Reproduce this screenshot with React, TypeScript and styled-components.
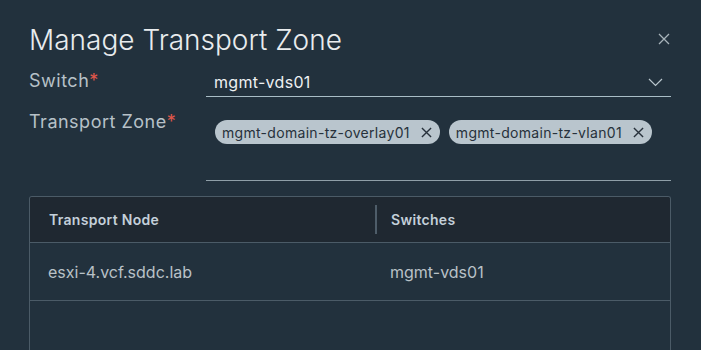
import React from 'react';
import styled, { createGlobalStyle } from 'styled-components';

const GlobalStyle = createGlobalStyle`
  html, body {
    margin: 0;
    padding: 0;
    background: #22313d;
    font-family: Inter, "Open Sans", sans-serif;
  }
`;

const Modal = styled.div`
  width: 701px;
  height: 350px;
  overflow: hidden;
  box-sizing: border-box;
  padding: 22px 30px 0 29px;
  background: #22313d;
  color: #e6e9eb;
`;

const Header = styled.div`
  display: flex;
  align-items: center;
  justify-content: space-between;
  height: 36px;
`;

const Title = styled.h1`
  margin: 0;
  font-size: 28px;
  line-height: 36px;
  font-weight: 300;
  color: #e9ecee;
`;

const CloseButton = styled.button`
  border: 0;
  background: none;
  padding: 0;
  width: 14px;
  height: 14px;
  display: flex;
  margin-right: -1px;
  cursor: pointer;
`;

const FormRow = styled.div<{ $gap: number }>`
  display: grid;
  grid-template-columns: 177px 1fr;
  align-items: start;
  margin-top: ${p => p.$gap}px;
`;

const Label = styled.label`
  font-size: 18px;
  letter-spacing: 0.5px;
  color: #b7c1c8;
  line-height: 22px;
  padding-top: 6px;
`;

const Required = styled.span`
  color: #e0574a;
`;

const SelectBox = styled.div`
  display: flex;
  align-items: center;
  justify-content: space-between;
  height: 32px;
  box-sizing: content-box;
  padding: 0 8px;
  border-bottom: 1px solid #a9bdc6;
  font-size: 16px;
  letter-spacing: 0.3px;
  color: #eef0f2;
  & > span {
    padding-top: 4px;
  }
  & > svg {
    margin-top: 4px;
  }
`;

const ChipField = styled.div`
  height: 76px;
  box-sizing: border-box;
  padding: 15px 0 0 9px;
  border-bottom: 1px solid #8f9fa8;
  display: flex;
  align-items: flex-start;
  gap: 9px;
`;

const Chip = styled.span`
  display: inline-flex;
  align-items: center;
  gap: 11px;
  height: 24px;
  box-sizing: border-box;
  padding: 0 8px 0 7px;
  border-radius: 12px;
  background: #b9c5cd;
  color: #27313b;
  font-size: 14px;
  letter-spacing: 0.3px;
`;

const Table = styled.div`
  margin-top: 15px;
  border: 1px solid #4b5b67;
  border-bottom: 0;
  border-radius: 3px 3px 0 0;
  overflow: hidden;
`;

const HeadRow = styled.div`
  display: grid;
  grid-template-columns: 345px 1fr;
  height: 45px;
  background: #1f2831;
  border-bottom: 1px solid #4b5b67;
`;

const HeadCell = styled.div<{ $divider?: boolean }>`
  display: flex;
  align-items: center;
  padding-left: ${p => (p.$divider ? '14px' : '19px')};
  font-size: 14px;
  font-weight: 600;
  letter-spacing: 0.3px;
  color: #c4d0da;
  border-left: ${p => (p.$divider ? '2px solid #4e5d69' : '0')};
  margin: ${p => (p.$divider ? '8px 0' : '0')};
`;

const BodyRow = styled.div`
  display: grid;
  grid-template-columns: 345px 1fr;
  height: 57px;
  border-bottom: 1px solid #4b5b67;
`;

const Cell = styled.div<{ $second?: boolean }>`
  display: flex;
  align-items: center;
  padding-left: ${p => (p.$second ? '15px' : '18px')};
  font-size: 16px;
  color: #b9c1c7;
`;

const EmptyArea = styled.div`
  height: 60px;
`;

const CloseIcon = ({ size, color, width }: { size: number; color: string; width: number }) => (
  <svg width={size} height={size} viewBox="0 0 12 12" fill="none">
    <path d="M1 1 L11 11 M11 1 L1 11" stroke={color} strokeWidth={width} />
  </svg>
);

const Chevron = () => (
  <svg width="15" height="9" viewBox="0 0 15 9" fill="none">
    <path d="M1 1 L7.5 7.5 L14 1" stroke="#b9c6cd" strokeWidth="1.2" />
  </svg>
);

const zones = ['mgmt-domain-tz-overlay01', 'mgmt-domain-tz-vlan01'];

const rows = [{ node: 'esxi-4.vcf.sddc.lab', sw: 'mgmt-vds01' }];

const App: React.FC = () => {
  return (
    <>
      <GlobalStyle />
      <Modal>
        <Header>
          <Title>Manage Transport Zone</Title>
          <CloseButton aria-label="Close">
            <CloseIcon size={12} color="#a7b3ba" width={1.3} />
          </CloseButton>
        </Header>

        <FormRow $gap={6}>
          <Label>
            Switch<Required>*</Required>
          </Label>
          <SelectBox>
            <span>mgmt-vds01</span>
            <Chevron />
          </SelectBox>
        </FormRow>

        <FormRow $gap={8}>
          <Label>
            Transport Zone<Required>*</Required>
          </Label>
          <ChipField>
            {zones.map(z => (
              <Chip key={z}>
                {z}
                <CloseIcon size={11} color="#27313b" width={1.5} />
              </Chip>
            ))}
          </ChipField>
        </FormRow>

        <Table>
          <HeadRow>
            <HeadCell>Transport Node</HeadCell>
            <HeadCell $divider>Switches</HeadCell>
          </HeadRow>
          {rows.map(r => (
            <BodyRow key={r.node}>
              <Cell>{r.node}</Cell>
              <Cell $second>{r.sw}</Cell>
            </BodyRow>
          ))}
          <EmptyArea />
        </Table>
      </Modal>
    </>
  );
};

export default App;
